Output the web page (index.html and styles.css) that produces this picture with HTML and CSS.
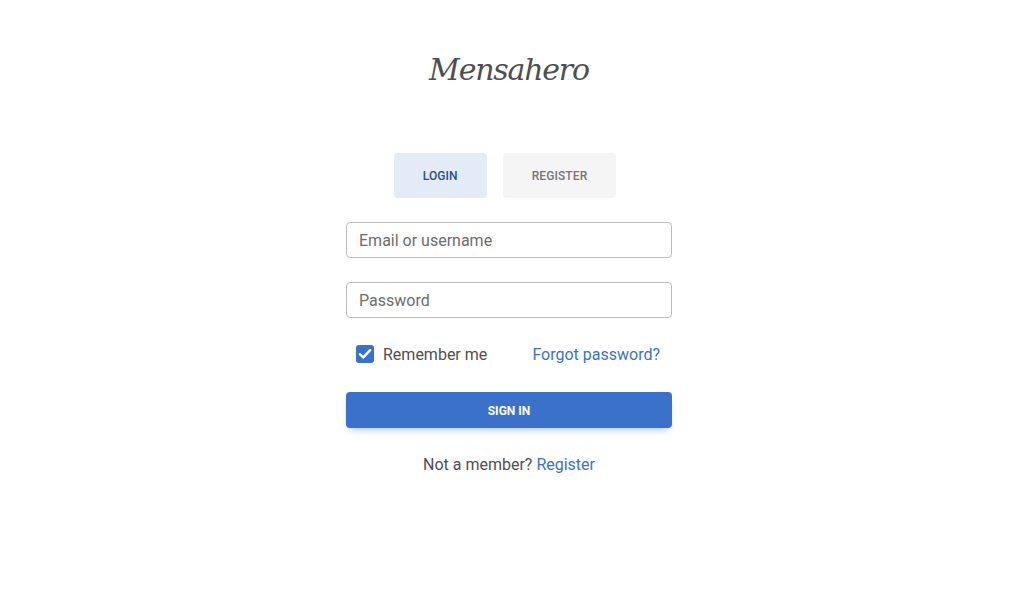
FILE: index.html
```html
<!DOCTYPE html>
<html lang="en">
<head>
<meta charset="utf-8">
<title>Mensahero</title>
<link rel="stylesheet" href="styles.css">
</head>
<body>
<main class="page">
  <h1 class="brand">Mensahero</h1>
  <div class="tabs">
    <button class="tab tab-active">Login</button>
    <button class="tab">Register</button>
  </div>
  <form class="form">
    <input class="field" type="text" placeholder="Email or username">
    <input class="field" type="password" placeholder="Password">
    <div class="options">
      <label class="remember">
        <span class="check">
          <svg width="14" height="12" viewBox="0 0 14 12"><path d="M1.8 6.2 L5.2 9.4 L12.2 2.2" fill="none" stroke="#fff" stroke-width="2.4" stroke-linecap="round" stroke-linejoin="round"/></svg>
        </span>
        Remember me
      </label>
      <a class="link" href="#">Forgot password?</a>
    </div>
    <button class="submit" type="button">Sign in</button>
    <p class="note">Not a member? <a class="link" href="#">Register</a></p>
  </form>
</main>
</body>
</html>
```
FILE: styles.css
```css
* { box-sizing: border-box; }
html, body { margin: 0; padding: 0; background: #fff; }
body { font-family: Roboto, "Liberation Sans", sans-serif; color: #4f4f4f; }
.page {
  display: flex;
  flex-direction: column;
  align-items: center;
  padding-top: 50px;
  padding-right: 9px;
}
.brand {
  margin: 0;
  font-family: "DejaVu Serif", Georgia, serif;
  font-style: italic;
  font-weight: normal;
  font-size: 30px;
  line-height: 40px;
  letter-spacing: -1.2px;
  color: #4f4f4f;
}
.tabs {
  display: flex;
  gap: 16px;
  margin-top: 63px;
  margin-right: 8px;
}
.tab {
  border: none;
  border-radius: 4px;
  height: 45px;
  padding: 0 29px;
  font-family: Roboto, sans-serif;
  font-size: 12px;
  font-weight: 500;
  text-transform: uppercase;
  background: #f5f5f5;
  color: #757575;
  letter-spacing: 0.1px;
}
.tab-active {
  background: #e3ebf7;
  color: #2c4e82;
}
.form {
  width: 326px;
  margin-top: 24px;
  display: flex;
  flex-direction: column;
}
.field {
  height: 36px;
  border: 1px solid #bdbdbd;
  border-radius: 4px;
  padding: 0 12px;
  font-family: Roboto, sans-serif;
  font-size: 16px;
  color: #4f4f4f;
  margin-bottom: 24px;
  outline: none;
}
.field::placeholder { color: #6d6d6d; opacity: 1; }
.options {
  display: flex;
  justify-content: space-between;
  align-items: center;
  padding: 0 12px 0 10px;
  height: 24px;
}
.remember {
  display: flex;
  align-items: center;
  gap: 9px;
  font-size: 16px;
  color: #4f4f4f;
}
.check {
  width: 18px;
  height: 18px;
  border-radius: 3px;
  background: #3b71ca;
  display: flex;
  align-items: center;
  justify-content: center;
}
.link { color: #3b71ca; text-decoration: none; font-size: 16px; }
.submit {
  margin-top: 26px;
  height: 36px;
  padding-top: 2px;
  border: none;
  border-radius: 4px;
  background: #3b71ca;
  color: #fff;
  font-family: Roboto, sans-serif;
  font-size: 12px;
  font-weight: 700;
  text-transform: uppercase;
  box-shadow: 0 4px 9px -4px rgba(59, 113, 202, 0.6);
}
.note {
  margin: 27px 0 0;
  text-align: center;
  font-size: 16px;
  line-height: 20px;
  color: #4f4f4f;
}
```
